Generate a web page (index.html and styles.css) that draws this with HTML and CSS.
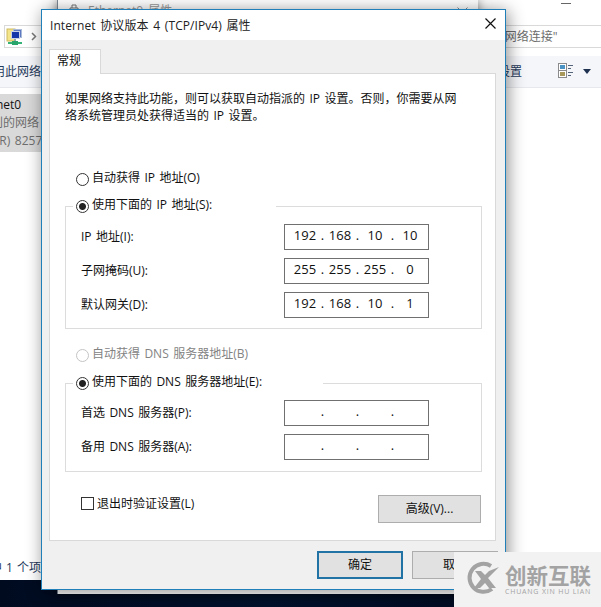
FILE: index.html
```html
<!DOCTYPE html>
<html lang="zh-CN">
<head>
    <meta charset="UTF-8">
    <title>Internet 协议版本 4 (TCP/IPv4) 属性</title>
    <link rel="stylesheet" href="styles.css">
</head>
<body>
    <div class="desktop">
        <!-- Network connections window -->
        <div class="explorer">
            <div class="explorer-top"><span class="minimize"></span></div>
            <div class="address-row">
                <div class="address">
                    <svg width="18" height="18" viewBox="0 0 18 18">
                        <rect x="1" y="1" width="8" height="12" fill="#f5e58a" stroke="#cdb95c"/>
                        <rect x="7.500" y="1.500" width="8" height="8" fill="#5d78c0" stroke="#a9b9d8"/>
                        <rect x="5.500" y="3.500" width="8" height="7" fill="#1536a8" stroke="#c9d2e4"/>
                        <path d="M9 11v4" stroke="#8fa3a8" stroke-width="2"/>
                        <path d="M2 15h14" stroke="#35b277" stroke-width="2"/>
                        <rect x="6" y="13" width="6" height="4" fill="#2aa56b"/>
                    </svg>
                    <svg width="6" height="9" viewBox="0 0 6 9"><path d="M1 1l3.500 3.500L1 8" fill="none" stroke="#777" stroke-width="1.500"/></svg>
                </div>
                <div class="search">搜索"网络连接"</div>
            </div>
            <div class="toolbar">
                <span class="tool-left">禁用此网络</span>
                <span class="tool-right">更改此连接的设置</span>
                <svg class="view-icon" width="16" height="16" viewBox="0 0 16 16">
                    <rect x=".5" y=".5" width="8" height="7" fill="#fff" stroke="#8b8b8b"/>
                    <rect x=".5" y="7.500" width="8" height="7" fill="#fff" stroke="#8b8b8b"/>
                    <rect x="2" y="2" width="5" height="4" fill="#4a93c4"/>
                    <rect x="2" y="9" width="5" height="4" fill="#a8985a"/>
                    <path d="M10 2.500h5M10 5.500h3M10 9.500h5M10 12.500h3" stroke="#56657a"/>
                </svg>
                <svg class="arrow" width="8" height="5" viewBox="0 0 8 5"><path d="M0 0h8L4 5z" fill="#1e3250"/></svg>
            </div>
            <div class="adapter">
                <div class="adapter-name">Ethernet0</div>
                <div class="adapter-net">未识别的网络</div>
                <div class="adapter-device">Intel(R) 8257</div>
            </div>
            <div class="status">选中 1 个项</div>
        </div>

        <!-- Adapter properties window -->
        <div class="parent-window">
            <svg width="10" height="14" viewBox="0 0 10 14"><path d="M1 14V4h8v10M3 4V1h4v3M3.500 7v6M6.500 7v6" fill="none" stroke="#777"/></svg>
            <span class="parent-title">Ethernet0 属性</span>
            <svg class="parent-close" width="11" height="11" viewBox="0 0 11 11"><path d="M.5.5l10 10M10.500.5l-10 10" stroke="#888"/></svg>
        </div>

        <!-- TCP/IPv4 dialog -->
        <div class="dialog">
            <div class="title-bar">
                <span class="title">Internet 协议版本 4 (TCP/IPv4) 属性</span>
                <svg class="close" width="11" height="11" viewBox="0 0 11 11"><path d="M.5.5l10 10M10.500.5l-10 10" stroke="#111" stroke-width="1.200"/></svg>
            </div>
            <div class="tab">常规</div>
            <div class="panel">
                <p class="intro">如果网络支持此功能，则可以获取自动指派的 IP 设置。否则，你需要从网<br>络系统管理员处获得适当的 IP 设置。</p>

                <div class="option option-auto-ip"><span class="radio"></span><span class="label">自动获得 IP 地址(O)</span></div>
                <fieldset class="group group-ip">
                    <legend class="option"><span class="radio checked"></span><span class="label">使用下面的 IP 地址(S):</span></legend>
                    <div class="row"><span class="label">IP 地址(I):</span><div class="ip"><b>192</b><i>.</i><b>168</b><i>.</i><b>10</b><i>.</i><b>10</b></div></div>
                    <div class="row"><span class="label">子网掩码(U):</span><div class="ip"><b>255</b><i>.</i><b>255</b><i>.</i><b>255</b><i>.</i><b>0</b></div></div>
                    <div class="row"><span class="label">默认网关(D):</span><div class="ip"><b>192</b><i>.</i><b>168</b><i>.</i><b>10</b><i>.</i><b>1</b></div></div>
                </fieldset>

                <div class="option option-auto-dns disabled"><span class="radio"></span><span class="label">自动获得 DNS 服务器地址(B)</span></div>
                <fieldset class="group group-dns">
                    <legend class="option"><span class="radio checked"></span><span class="label">使用下面的 DNS 服务器地址(E):</span></legend>
                    <div class="row"><span class="label">首选 DNS 服务器(P):</span><div class="ip"><b></b><i>.</i><b></b><i>.</i><b></b><i>.</i><b></b></div></div>
                    <div class="row"><span class="label">备用 DNS 服务器(A):</span><div class="ip"><b></b><i>.</i><b></b><i>.</i><b></b><i>.</i><b></b></div></div>
                </fieldset>

                <div class="panel-footer">
                    <span class="checkbox"></span>
                    <span class="label">退出时验证设置(L)</span>
                    <div class="btn btn-advanced">高级(V)...</div>
                </div>
            </div>
            <div class="buttons">
                <div class="btn btn-default">确定</div>
                <div class="btn">取消</div>
            </div>
        </div>

        <div class="watermark">
            <svg width="36" height="34" viewBox="0 0 36 34">
                <path d="M25 5A14 14 0 1 0 26 28" fill="none" stroke="#a3a3a3" stroke-width="4"/>
                <path d="M9 10h6l4 4 4-4 10-4-11 11 8 10h-7l-4-5-5 5H8l7-9z" fill="#a3a3a3"/>
            </svg>
            <div class="brand">
                <div class="brand-name">创新互联</div>
                <div class="brand-sub">CHUANG XIN HU LIAN</div>
            </div>
        </div>
    </div>
</body>
</html>
```

FILE: styles.css
```css
body {
    margin: 0;
    font-family: "Open Sans", "Noto Sans CJK SC", sans-serif;
    font-size: 12px;
    color: #111;
}
.desktop {
    position: relative;
    width: 601px;
    height: 607px;
    overflow: hidden;
    background: linear-gradient(90deg, #000b20, #00122c 45%, #00081c);
}
svg {
    display: block;
    flex: none;
}

/* explorer */
.explorer {
    display: flex;
    flex-direction: column;
    height: 580px;
    background: #fff;
    overflow: hidden;
    white-space: nowrap;
}
.explorer-top {
    display: flex;
    justify-content: flex-end;
    height: 25px;
}
.minimize {
    width: 10px;
    height: 1px;
    margin: 3px 30px 0 0;
    background: #666;
}
.address-row {
    display: flex;
    justify-content: space-between;
    height: 23px;
    margin-bottom: 8px;
}
.address {
    display: flex;
    align-items: center;
    gap: 7px;
    box-sizing: border-box;
    width: 420px;
    margin-left: 4px;
    padding-left: 1px;
    border: 1px solid #d9d9d9;
}
.search {
    box-sizing: border-box;
    width: 130px;
    border: 1px solid #d9d9d9;
    border-right: none;
    line-height: 21px;
    color: #6d6d6d;
    padding-left: 4px;
}
.toolbar {
    display: flex;
    align-items: center;
    height: 31px;
    background: #f5f6f9;
    border-bottom: 1px solid #e6e8ed;
    color: #1e395b;
}
.tool-left {
    width: 60px;
    margin: -2px 0 0 -19px;
}
.tool-right {
    margin: -2px 0 0 auto;
}
.view-icon {
    margin: -2px 0 0 36px;
}
.arrow {
    margin: 0 10px 0 9px;
}
.adapter {
    width: 121px;
    height: 56px;
    margin-top: 6px;
    padding-top: 2px;
    background: #d9d9d9;
    color: #6d6d6d;
    line-height: 18px;
}
.adapter-name {
    text-indent: -34px;
    color: #111;
}
.adapter-net {
    text-indent: -33px;
}
.adapter-device {
    text-indent: -29px;
    word-spacing: 1.5px;
}
.status {
    margin: auto 0 2px -22px;
    line-height: 20px;
    color: #1e395b;
    word-spacing: 1px;
}

/* window behind the dialog */
.parent-window {
    position: absolute;
    left: 57px;
    top: 0;
    display: flex;
    box-sizing: border-box;
    width: 421px;
    height: 594px;
    padding: 4px 10px 0 11px;
    border-left: 1px solid #7b8794;
    background: #fff;
    box-shadow: 0 0 10px rgba(0, 0, 0, .5);
    color: #999;
}
.parent-title {
    flex: 1;
    margin: -3px 0 0 9px;
    word-spacing: 2px;
}
.parent-close {
    margin-top: 3px;
}

/* dialog */
.dialog {
    position: absolute;
    left: 41px;
    top: 9px;
    box-sizing: border-box;
    width: 465px;
    height: 581px;
    border: 1px solid #1f7fb8;
    background: #f0f0f0;
    box-shadow: 2px 2px 16px rgba(0, 0, 0, .45);
    word-spacing: 1.3px;
}
.title-bar {
    display: flex;
    align-items: center;
    justify-content: space-between;
    height: 30px;
    padding: 0 9px 0 8px;
    background: #fff;
}
.title {
    margin-top: -1px;
    color: #222;
    letter-spacing: .07px;
    word-spacing: 1.5px;
}
.close {
    margin-top: -3px;
}
.tab {
    position: relative;
    box-sizing: border-box;
    width: 52px;
    height: 25px;
    margin: 9px 0 -1px 7px;
    padding-left: 7px;
    border: 1px solid #d9d9d9;
    border-bottom: none;
    background: #fff;
    line-height: 22px;
}
.panel {
    box-sizing: border-box;
    width: 447px;
    height: 468px;
    margin-left: 7px;
    padding: 16px 14px 0 15px;
    border: 1px solid #d9d9d9;
    background: #fff;
}
.intro {
    margin: 0;
    line-height: 17px;
    white-space: nowrap;
}
.option {
    display: flex;
    align-items: center;
    gap: 3px;
    height: 20px;
    white-space: nowrap;
}
.option .label {
    margin-top: -4px;
}
.option-auto-ip {
    margin: 45px 0 7px 11px;
}
.option-auto-dns {
    margin: 16px 0 8px 11px;
}
.radio {
    box-sizing: border-box;
    width: 13px;
    height: 13px;
    border: 1px solid #333;
    border-radius: 50%;
}
.radio.checked {
    background: radial-gradient(circle, #222 3px, #fff 4px);
}
.disabled {
    color: #838383;
}
.disabled .radio {
    border-color: #c4c4c4;
}
.group {
    box-sizing: border-box;
    width: 417px;
    margin: 0;
    padding: 7px 0 0;
    border: 1px solid #dcdcdc;
}
.group legend {
    box-sizing: border-box;
    width: 203px;
    margin-left: 7px;
    padding: 0 0 0 3px;
}
.group-ip {
    height: 133px;
    padding-top: 8px;
}
.group-dns {
    height: 99px;
}
.group-dns legend {
    width: 250px;
}
.row {
    display: flex;
    align-items: center;
    justify-content: space-between;
    height: 26px;
    margin-bottom: 8px;
    padding: 0 52px 0 15px;
}
.row .label {
    margin-top: -2px;
}
.ip {
    display: flex;
    box-sizing: border-box;
    width: 145px;
    height: 26px;
    padding-left: 5px;
    border: 1px solid #707070;
    font-size: 13px;
    line-height: 21px;
}
.ip b {
    width: 30px;
    font-weight: normal;
    text-align: center;
}
.ip i {
    width: 5px;
    font-style: normal;
    text-align: center;
}
.panel-footer {
    display: flex;
    align-items: center;
    height: 28px;
    margin-top: 23px;
    padding-left: 16px;
}
.checkbox {
    box-sizing: border-box;
    width: 13px;
    height: 13px;
    margin: -11px 3px 0 0;
    border: 1px solid #333;
}
.panel-footer .label {
    margin-top: -12px;
}
.btn {
    box-sizing: border-box;
    width: 86px;
    height: 28px;
    border: 1px solid #adadad;
    background: #e1e1e1;
    line-height: 25px;
    text-align: center;
}
.panel-footer .btn-advanced {
    width: 103px;
    margin-left: auto;
}
.btn-default {
    border: 2px solid #2273a5;
    line-height: 23px;
}
.buttons {
    display: flex;
    justify-content: flex-end;
    gap: 9px;
    margin: 10px 7px 0 0;
}

/* logo in the corner */
.watermark {
    position: absolute;
    left: 454px;
    top: 552px;
    display: flex;
    align-items: center;
    gap: 3px;
    box-sizing: border-box;
    width: 147px;
    height: 55px;
    padding: 0 0 3px 12px;
    background: #f2f2f2;
    color: #a3a3a3;
    white-space: nowrap;
}
.brand-name {
    margin-top: 3px;
    font-size: 21.5px;
    font-weight: bold;
    line-height: 23px;
}
.brand-sub {
    font-size: 7px;
    line-height: 9px;
    letter-spacing: .8px;
}
```
